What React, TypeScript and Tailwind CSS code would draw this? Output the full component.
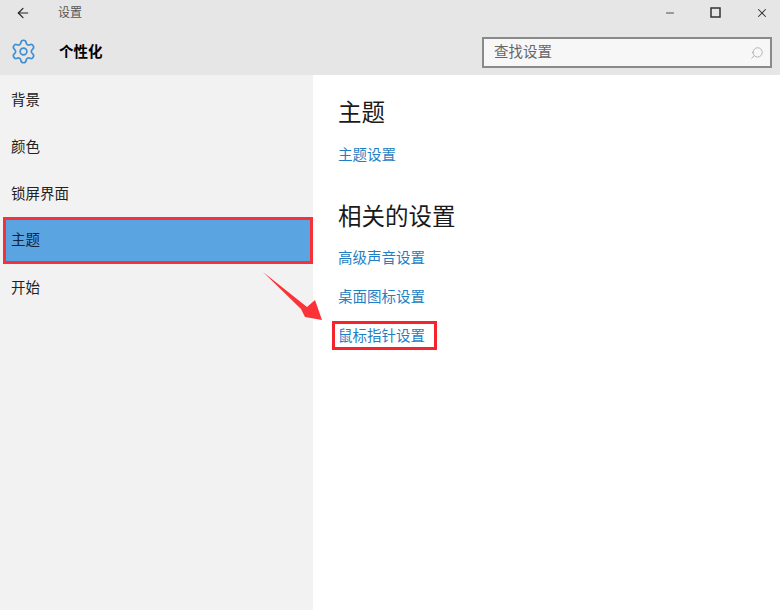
import React from "react";
import { ArrowLeft, Minus, X, Search, Settings } from "lucide-react";

const navItems = ["背景", "颜色", "锁屏界面", "主题", "开始"];
const relatedLinks = ["高级声音设置", "桌面图标设置"];

const App: React.FC = () => {
  return (
    <div className="relative w-[780px] h-[610px] overflow-hidden bg-white flex flex-col font-['Liberation_Sans','Noto_Sans_CJK_SC',sans-serif]">
      {/* Title bar + page header */}
      <header className="h-[75px] shrink-0 bg-[#e6e6e6] flex flex-col">
        <div className="h-[25px] flex items-center">
          <div className="w-[58px] pl-[15px]">
            <ArrowLeft size={16} strokeWidth={1.75} className="text-[#222]" />
          </div>
          <span className="text-[12px] text-[#555]">设置</span>
          <div className="ml-auto flex items-center gap-[34px] pr-[11px] text-[#333]">
            <Minus size={12} strokeWidth={1.75} />
            <svg width="11" height="11" viewBox="0 0 11 11">
              <rect x="1" y="1" width="9" height="9" fill="none" stroke="currentColor" strokeWidth="1.5" />
            </svg>
            <X size={14} strokeWidth={1.75} />
          </div>
        </div>
        <div className="flex-1 flex items-start">
          <div className="w-[59px] pl-[10px] pt-[13px]">
            <Settings size={27} strokeWidth={1.5} className="text-[#3f8fd2]" />
          </div>
          <span className="text-[14.5px] font-bold leading-[22px] pt-[16px] text-black">个性化</span>
          <div className="ml-auto mr-[8px] mt-[12px] w-[290px] h-[31px] border-[2px] border-[#8a8a8a] bg-[#f7f7f7] flex items-center pl-[10px] pr-[6px]">
            <span className="text-[14.5px] text-[#666]">查找设置</span>
            <Search size={14} strokeWidth={1.5} className="ml-auto text-[#aaa] -scale-x-100" />
          </div>
        </div>
      </header>

      <div className="flex-1 flex">
        {/* Sidebar */}
        <nav className="w-[313px] shrink-0 bg-[#f2f2f2] flex flex-col pt-[1px]">
          {navItems.map((item) =>
            item === "主题" ? (
              <div
                key={item}
                className="h-[47px] ml-[3px] border-[3px] border-[#f5323a] bg-[#5ba4e2] flex items-center pl-[5px] text-[14.5px] text-[#10233a]"
              >
                {item}
              </div>
            ) : (
              <div key={item} className="h-[47px] flex items-center pl-[11px] text-[14.5px] text-[#222]">
                <span className="block leading-[22px] mb-[-1px]">{item}</span>
              </div>
            )
          )}
        </nav>

        {/* Content */}
        <main className="flex-1 pl-[25px] pt-[21px] flex flex-col items-start">
          <h2 className="text-[23.5px] leading-[34px] text-[#1a1a1a]">主题</h2>
          <a className="mt-[14px] text-[14.5px] leading-[22px] text-[#1f7fc4]">主题设置</a>
          <h2 className="mt-[34px] text-[23.5px] leading-[34px] text-[#1a1a1a]">相关的设置</h2>
          {relatedLinks.map((link, i) => (
            <a key={link} className={`${i === 0 ? "mt-[13px]" : "mt-[17px]"} text-[14.5px] leading-[22px] text-[#1f7fc4]`}>
              {link}
            </a>
          ))}
          <a className="mt-[13px] -ml-[6px] border-[3px] border-[#f5232b] pl-[3px] pr-[9px] pt-[2px] h-[29px] flex items-center text-[14.5px] text-[#1f7fc4]">
            鼠标指针设置
          </a>
        </main>
      </div>

      {/* Red annotation arrow */}
      <svg className="absolute left-[260px] top-[268px]" width="66" height="56" viewBox="0 0 66 56">
        <path d="M3 4 L47 39 L55 32 L62 52 L45 49 L41 41 Z" fill="#fb3237" />
      </svg>
    </div>
  );
};

export default App;
